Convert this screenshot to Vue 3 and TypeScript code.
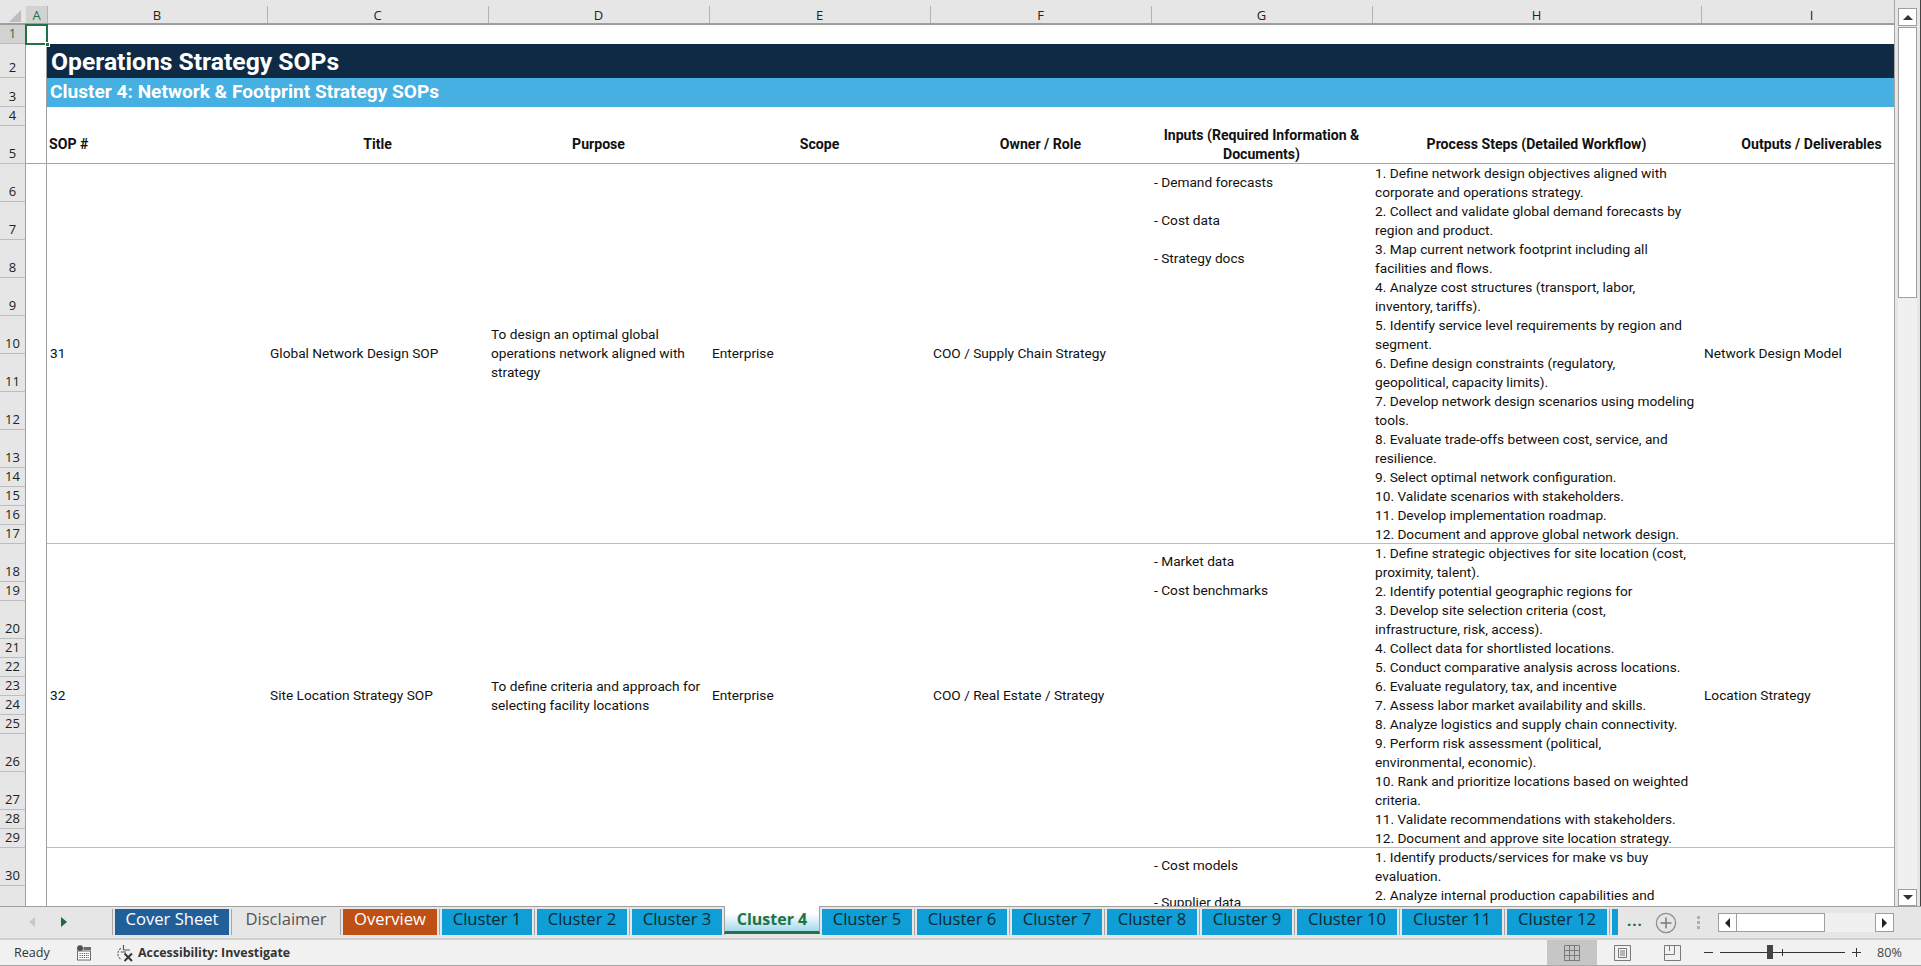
<script setup lang="ts">
const colHeads = ['A', 'B', 'C', 'D', 'E', 'F', 'G', 'H', 'I']
const rowHeads: number[] = Array.from({ length: 30 }, (_, i) => i + 1)

const headers = [
  { key: 'sop', lines: ['SOP #'], left: true },
  { key: 'title', lines: ['Title'] },
  { key: 'purpose', lines: ['Purpose'] },
  { key: 'scope', lines: ['Scope'] },
  { key: 'owner', lines: ['Owner / Role'] },
  { key: 'inputs', lines: ['Inputs (Required Information &', 'Documents)'] },
  { key: 'steps', lines: ['Process Steps (Detailed Workflow)'] },
  { key: 'outputs', lines: ['Outputs / Deliverables'] },
]

const sops = [
  {
    id: 'r31',
    cols: [['31'], ['Global Network Design SOP'], ['To design an optimal global', 'operations network aligned with', 'strategy'], ['Enterprise'], ['COO / Supply Chain Strategy']],
    inputs: ['- Demand forecasts', '- Cost data', '- Strategy docs'],
    steps: [
      '1. Define network design objectives aligned with', 'corporate and operations strategy.',
      '2. Collect and validate global demand forecasts by', 'region and product.',
      '3. Map current network footprint including all', 'facilities and flows.',
      '4. Analyze cost structures (transport, labor,', 'inventory, tariffs).',
      '5. Identify service level requirements by region and', 'segment.',
      '6. Define design constraints (regulatory,', 'geopolitical, capacity limits).',
      '7. Develop network design scenarios using modeling', 'tools.',
      '8. Evaluate trade-offs between cost, service, and', 'resilience.',
      '9. Select optimal network configuration.',
      '10. Validate scenarios with stakeholders.',
      '11. Develop implementation roadmap.',
      '12. Document and approve global network design.',
    ],
    output: 'Network Design Model',
  },
  {
    id: 'r32',
    cols: [['32'], ['Site Location Strategy SOP'], ['To define criteria and approach for', 'selecting facility locations'], ['Enterprise'], ['COO / Real Estate / Strategy']],
    inputs: ['- Market data', '- Cost benchmarks'],
    steps: [
      '1. Define strategic objectives for site location (cost,', 'proximity, talent).',
      '2. Identify potential geographic regions for',
      '3. Develop site selection criteria (cost,', 'infrastructure, risk, access).',
      '4. Collect data for shortlisted locations.',
      '5. Conduct comparative analysis across locations.',
      '6. Evaluate regulatory, tax, and incentive',
      '7. Assess labor market availability and skills.',
      '8. Analyze logistics and supply chain connectivity.',
      '9. Perform risk assessment (political,', 'environmental, economic).',
      '10. Rank and prioritize locations based on weighted', 'criteria.',
      '11. Validate recommendations with stakeholders.',
      '12. Document and approve site location strategy.',
    ],
    output: 'Location Strategy',
  },
  {
    id: 'r33',
    cols: [[], [], [], [], []],
    inputs: ['- Cost models', '- Supplier data'],
    steps: [
      '1. Identify products/services for make vs buy', 'evaluation.',
      '2. Analyze internal production capabilities and',
    ],
    output: '',
  },
]

const tabs = [
  { name: 'Cover Sheet', cls: 'cover' },
  { name: 'Disclaimer', cls: 'plain' },
  { name: 'Overview', cls: 'overview' },
  { name: 'Cluster 1', cls: 'cluster' },
  { name: 'Cluster 2', cls: 'cluster' },
  { name: 'Cluster 3', cls: 'cluster' },
  { name: 'Cluster 4', cls: 'active' },
  { name: 'Cluster 5', cls: 'cluster' },
  { name: 'Cluster 6', cls: 'cluster' },
  { name: 'Cluster 7', cls: 'cluster' },
  { name: 'Cluster 8', cls: 'cluster' },
  { name: 'Cluster 9', cls: 'cluster' },
  { name: 'Cluster 10', cls: 'cluster wide' },
  { name: 'Cluster 11', cls: 'cluster wide' },
  { name: 'Cluster 12', cls: 'cluster wide' },
  { name: '', cls: 'cluster stub' },
]
</script>

<template>
  <div class="app">
    <div class="body">
      <div class="sheet">
        <div class="corner">
          <svg width="12" height="12" viewBox="0 0 12 12"><path d="M12 0V12H0Z" fill="#bdbdbd" /></svg>
        </div>
        <div
          v-for="c in colHeads"
          :key="c"
          class="col-head"
          :class="{ on: c === 'A' }"
        >{{ c }}</div>

        <div
          v-for="n in rowHeads"
          :key="n"
          class="row-head"
          :class="{ on: n === 1 }"
          :style="{ gridRow: n + 1 }"
        >{{ n }}</div>
        <div class="row-blank"></div>

        <div class="a1"><span class="handle"></span></div>
        <div class="a-top"></div>
        <div class="a-rest"></div>

        <div class="top-blank"></div>
        <div class="banner-1">Operations Strategy SOPs</div>
        <div class="banner-2">Cluster 4: Network &amp; Footprint Strategy SOPs</div>
        <div class="gap-row"></div>

        <div
          v-for="h in headers"
          :key="h.key"
          class="hcell"
          :class="{ left: h.left }"
        >
          <div v-for="l in h.lines" :key="l">{{ l }}</div>
        </div>

        <div v-for="s in sops" :key="s.id" class="record" :class="s.id">
          <div v-for="(col, i) in s.cols" :key="i" class="cell mid">
            <div v-for="l in col" :key="l">{{ l }}</div>
          </div>
          <div class="cell inputs" :class="'in-' + s.id">
            <div v-for="l in s.inputs" :key="l">{{ l }}</div>
          </div>
          <div class="cell">
            <div v-for="l in s.steps" :key="l">{{ l }}</div>
          </div>
          <div class="cell mid">{{ s.output }}</div>
        </div>
      </div>

      <div class="vscroll">
        <button class="vbtn up" type="button"><span class="tri-up"></span></button>
        <div class="vthumb"></div>
        <div class="vtrack"></div>
        <button class="vbtn down" type="button"><span class="tri-down"></span></button>
      </div>
    </div>

    <div class="tabbar">
      <div class="nav">
        <span class="arr-left"></span>
        <span class="arr-right"></span>
      </div>
      <div class="tabs">
        <div v-for="t in tabs" :key="t.name + t.cls" class="tab" :class="t.cls">{{ t.name }}</div>
      </div>
      <div class="more">...</div>
      <svg class="add" width="22" height="22" viewBox="0 0 22 22">
        <circle cx="11" cy="11" r="9.6" fill="none" stroke="#8f8f8f" stroke-width="1.3" />
        <path d="M11 5.5V16.5M5.5 11H16.5" stroke="#7a7a7a" stroke-width="1.5" />
      </svg>
      <div class="grip"><i></i><i></i><i></i></div>
      <div class="hscroll">
        <span class="hbtn"><span class="tri-left"></span></span>
        <span class="hthumb"></span>
        <span class="htrack"></span>
        <span class="hbtn"><span class="tri-right"></span></span>
      </div>
    </div>

    <div class="status">
      <span class="ready">Ready</span>
      <svg class="cal" width="16" height="16" viewBox="0 0 16 16">
        <circle cx="4" cy="3.2" r="3" fill="#4f4f4f" />
        <rect x="7.5" y="2" width="7.5" height="3" fill="#6b6b6b" />
        <rect x="1.5" y="6" width="13" height="9" fill="#fff" stroke="#6b6b6b" />
        <path d="M3.5 8.5H13M3.5 10.5H13M3.5 12.5H13" stroke="#5a5a5a" stroke-dasharray="1.2 1" />
      </svg>
      <svg class="acc" width="20" height="18" viewBox="0 0 20 18">
        <path d="M6 4.2A6.5 6.5 0 0 0 6.5 15.6" fill="none" stroke="#6a6a6a" stroke-dasharray="2.4 1" stroke-width="1.1" />
        <path d="M8.5 1V6M8.5 6H15M5.8 8H11" fill="none" stroke="#555" stroke-width="1.2" />
        <path d="M9.5 9.5L17 17M17 9.5L9.5 17" stroke="#333" stroke-width="1.9" />
      </svg>
      <span class="acc-text">Accessibility: Investigate</span>
      <span class="spacer"></span>
      <span class="view current">
        <svg width="16" height="16" viewBox="0 0 16 16">
          <path d="M.5.5H15.5V15.5H.5ZM.5 5.5H15.5M.5 10.5H15.5M5.5.5V15.5M10.5.5V15.5" fill="none" stroke="#7a7a7a" />
        </svg>
      </span>
      <span class="view">
        <svg width="17" height="16" viewBox="0 0 17 16">
          <path d="M.5.5H16.5V15.5H.5Z" fill="none" stroke="#7a7a7a" />
          <path d="M4.5 3.5H12.5V12.5H4.5ZM6 6H11M6 8H11M6 10H11" fill="none" stroke="#7a7a7a" />
        </svg>
      </span>
      <span class="view">
        <svg width="17" height="16" viewBox="0 0 17 16">
          <path d="M.5.5H16.5V15.5H.5ZM.5 9.5H10.5V.5M5.5.5V6" fill="none" stroke="#7a7a7a" />
        </svg>
      </span>
      <div class="zoom">
        <span class="zminus"></span>
        <span class="zline"><span class="ztick"></span><span class="zthumb"></span></span>
        <span class="zplus"></span>
        <span class="zpct">80%</span>
      </div>
    </div>
  </div>
</template>

<style>
html, body { margin: 0; padding: 0; background: #e6e6e6; overflow: hidden; }
</style>

<style scoped>
.app {
  width: 1921px;
  height: 966px;
  display: flex;
  flex-direction: column;
  overflow: hidden;
  background: #e6e6e6;
  font-family: Roboto, "Liberation Sans", sans-serif;
  color: #111;
  box-shadow: inset -1px 0 0 #444;
}
.body { display: flex; height: 906px; flex: none; }

.sheet {
  width: 1895px;
  flex: none;
  height: 906px;
  overflow: hidden;
  display: grid;
  grid-template-columns: 26px 21px 220px 221px 221px 221px 221px 221px 329px 221px;
  grid-template-rows:
    25px 19px 34px 29px 19px 38px
    repeat(8, 38px) repeat(4, 19px)
    38px 19px 38px repeat(5, 19px) 38px 38px 19px 19px
    38px 1fr;
  font-size: 13.7px;
  line-height: 19px;
  background: #fff;
  border-right: 1px solid #a6a6a6;
  box-sizing: border-box;
}

.corner {
  grid-column: 1;
  grid-row: 1;
  background: #e6e6e6;
  border-bottom: 2px solid #9e9e9e;
  box-sizing: border-box;
  padding: 10px 0 0 9px;
  line-height: 0;
}
.col-head {
  grid-row: 1;
  background: #e6e6e6;
  border-bottom: 2px solid #9e9e9e;
  box-sizing: border-box;
  text-align: center;
  font-family: "Open Sans", sans-serif;
  font-size: 13px;
  line-height: 18px;
  padding-top: 6px;
  position: relative;
  color: #222;
}
.col-head::after {
  content: "";
  position: absolute;
  right: -1px;
  top: 6px;
  bottom: 0;
  width: 1px;
  background: #b3b3b3;
  z-index: 1;
}
.col-head.on { background: linear-gradient(#e6e6e6 6px, #d2d2d2 6px); color: #217346; }

.row-head {
  grid-column: 1;
  background: #e6e6e6;
  border-right: 1px solid #a0a0a0;
  border-bottom: 1px solid #bdbdbd;
  box-sizing: border-box;
  display: flex;
  align-items: flex-end;
  justify-content: center;
  font-family: "Open Sans", sans-serif;
  font-size: 13px;
  line-height: 19px;
  color: #222;
}
.row-head.on { background: #d2d2d2; color: #217346; }
.row-blank {
  grid-column: 1;
  grid-row: 32;
  background: #e6e6e6;
  border-right: 1px solid #a0a0a0;
  box-sizing: border-box;
}

.a1 {
  grid-column: 2;
  grid-row: 2;
  position: relative;
  border-right: 1px solid #a0a0a0;
  box-sizing: border-box;
}
.a1::before {
  content: "";
  position: absolute;
  left: -1px;
  top: -1px;
  right: -2px;
  bottom: -1px;
  border: 2px solid #217346;
}
.handle {
  position: absolute;
  right: -4px;
  bottom: -3px;
  width: 5px;
  height: 5px;
  background: #217346;
  border: 1px solid #fff;
  z-index: 1;
  box-sizing: border-box;
}
.a-top {
  grid-column: 2;
  grid-row: 3 / 7;
  border-right: 1px solid #a0a0a0;
  border-bottom: 1px solid #a6a6a6;
  box-sizing: border-box;
}
.a-rest {
  grid-column: 2;
  grid-row: 7 / 33;
  border-right: 1px solid #a0a0a0;
  box-sizing: border-box;
}
.top-blank { grid-column: 3 / 11; grid-row: 2; }
.gap-row { grid-column: 3 / 11; grid-row: 5; }
.banner-1 {
  grid-column: 3 / 11;
  grid-row: 3;
  background: #0f2a44;
  color: #fff;
  font-weight: 700;
  font-size: 24.7px;
  line-height: 36px;
  padding-left: 4px;
}
.banner-2 {
  grid-column: 3 / 11;
  grid-row: 4;
  background: #45b0e1;
  color: #fff;
  font-weight: 700;
  font-size: 19.1px;
  line-height: 28px;
  padding-left: 3px;
}
.hcell {
  grid-row: 6;
  text-align: center;
  font-weight: 700;
  font-size: 14.1px;
  display: flex;
  flex-direction: column;
  justify-content: center;
  padding: 0 2px;
  line-height: 19px;
  border-bottom: 1px solid #a6a6a6;
  box-sizing: border-box;
  white-space: nowrap;
}
.hcell.left { text-align: left; }

.record {
  grid-column: 3 / 11;
  display: grid;
  grid-template-columns: 220px 221px 221px 221px 221px 221px 329px 221px;
  border-bottom: 1px solid #bdbdbd;
  box-sizing: border-box;
  min-height: 0;
}
.r31 { grid-row: 7 / 19; }
.r32 { grid-row: 19 / 31; }
.r33 { grid-row: 31 / 33; border-bottom: 0; }
.cell {
  padding: 0 3px;
  white-space: nowrap;
  min-height: 0;
}
.cell.mid {
  display: flex;
  flex-direction: column;
  justify-content: center;
}
.inputs { display: flex; flex-direction: column; }
.in-r31 { padding-top: 9px; gap: 19px; }
.in-r32 { padding-top: 8px; gap: 10px; }
.in-r33 { padding-top: 8px; gap: 18px; }

.vscroll {
  width: 26px;
  flex: none;
  display: flex;
  flex-direction: column;
  box-sizing: border-box;
  padding: 8px 4px 0 3px;
  height: 906px;
}
.vbtn {
  height: 18px;
  padding: 0;
  background: #fff;
  border: 1px solid #9e9e9e;
  display: flex;
  align-items: center;
  justify-content: center;
  box-sizing: border-box;
  flex: none;
  width: 19px;
}
.vbtn.down { height: 17px; }
.vthumb {
  height: 271px;
  flex: none;
  width: 19px;
  background: #fff;
  border: 1px solid #9e9e9e;
  box-sizing: border-box;
  margin-top: 1px;
}
.vtrack { flex: 1; background: #f0f0f0; width: 19px; }
.tri-up { border: 5px solid transparent; border-top: 0; border-bottom: 5px solid #333; }
.tri-down { border: 5px solid transparent; border-bottom: 0; border-top: 5px solid #333; }

.tabbar {
  height: 32px;
  flex: none;
  display: flex;
  background: #e6e6e6;
  border-top: 1px solid #a0a0a0;
  box-sizing: border-box;
  position: relative;
}
.nav {
  width: 115px;
  flex: none;
  position: relative;
  display: flex;
  align-items: center;
  padding: 0 0 1px 29px;
  box-sizing: border-box;
  gap: 26px;
}
.arr-left {
  border: 5px solid transparent;
  border-left: 0;
  border-right: 6px solid #c8c8c8;
}
.arr-right {
  border: 5px solid transparent;
  border-right: 0;
  border-left: 6px solid #1c6b3c;
}
.nav::after {
  content: "";
  position: absolute;
  right: 2px;
  top: 2px;
  height: 26px;
  width: 1px;
  background: #a6a6a6;
}
.tabs {
  width: 1503px;
  flex: none;
  display: flex;
  gap: 5px;
  padding-top: 2px;
  height: 28px;
  box-sizing: border-box;
}
.tab {
  flex: none;
  width: 90px;
  height: 26px;
  text-align: center;
  font-family: "Open Sans", sans-serif;
  font-size: 16.6px;
  line-height: 20px;
  position: relative;
  white-space: nowrap;
}
.tab:not(.active):not(.stub)::after {
  content: "";
  position: absolute;
  right: -3px;
  top: 0;
  width: 1px;
  height: 26px;
  background: #a6a6a6;
}
.cluster { background: #0f9ed5; color: #0b2a33; }
.cover { width: 114px; background: #215f9a; color: #fff; }
.plain { width: 104px; color: #555; }
.overview { width: 94px; background: #c04f15; color: #fff; }
.wide { width: 100px; }
.stub { width: 6px; }
.active {
  width: 96px;
  height: 28px;
  margin: -3px -3px 0 -3px;
  padding-top: 3px;
  box-sizing: border-box;
  background: linear-gradient(#fff 30%, #a6d8ee 100%);
  border-left: 1px solid #a0a0a0;
  border-right: 1px solid #a0a0a0;
  border-bottom: 3px solid #217346;
  color: #217346;
  font-weight: 700;
  font-size: 16px;
  line-height: 20px;
}
.more {
  margin-left: 9px;
  width: 14px;
  flex: none;
  color: #1c6b3c;
  font-size: 15px;
  font-weight: 700;
  line-height: 26px;
  letter-spacing: 1px;
  font-family: "Open Sans", sans-serif;
}
.add { margin: 5px 0 0 14px; flex: none; }
.grip {
  margin: 9px 0 0 20px;
  display: flex;
  flex-direction: column;
  gap: 2px;
  flex: none;
}
.grip i { width: 3px; height: 3px; background: #b0b0b0; display: block; }
.hscroll {
  display: flex;
  width: 176px;
  height: 19px;
  margin: 6px 0 0 18px;
  flex: none;
}
.hbtn {
  width: 19px;
  flex: none;
  height: 19px;
  background: #fff;
  border: 1px solid #9e9e9e;
  box-sizing: border-box;
  display: flex;
  align-items: center;
  justify-content: center;
}
.hthumb {
  width: 88px;
  flex: none;
  background: #fff;
  border: 1px solid #9e9e9e;
  border-left: 0;
  box-sizing: border-box;
}
.htrack { flex: 1; background: #f0f0f0; }
.tri-left { border: 5px solid transparent; border-left: 0; border-right: 5px solid #222; }
.tri-right { border: 5px solid transparent; border-right: 0; border-left: 5px solid #222; }

.status {
  height: 28px;
  flex: none;
  display: flex;
  align-items: center;
  background: #f1f1f1;
  border-top: 2px solid #d0d0d0;
  border-bottom: 1px solid #a8a8a8;
  box-sizing: border-box;
  font-family: "Open Sans", sans-serif;
  font-size: 12.6px;
  color: #333;
}
.ready { margin-left: 14px; width: 62px; flex: none; }
.cal { flex: none; }
.acc { margin-left: 23px; flex: none; }
.acc-text { margin-left: 3px; font-weight: 700; font-size: 12.4px; color: #333; }
.spacer { flex: 1; }
.view {
  width: 50px;
  height: 100%;
  flex: none;
  display: flex;
  align-items: center;
  justify-content: center;
}
.view.current { background: #c6c6c6; }
.zoom {
  width: 224px;
  flex: none;
  display: flex;
  align-items: center;
  padding-left: 7px;
  box-sizing: border-box;
}
.zminus { width: 9px; height: 1px; background: #333; flex: none; }
.zline {
  width: 125px;
  height: 1px;
  background: #333;
  margin-left: 7px;
  flex: none;
  position: relative;
}
.ztick { position: absolute; left: 62px; top: -3px; width: 1px; height: 7px; background: #333; }
.zthumb { position: absolute; left: 47px; top: -7px; width: 6px; height: 14px; background: #444; }
.zplus {
  width: 9px;
  height: 9px;
  margin-left: 7px;
  flex: none;
  background: linear-gradient(#333, #333) center / 9px 1px no-repeat, linear-gradient(#333, #333) center / 1px 9px no-repeat;
}
.zpct { margin-left: 16px; color: #444; }
</style>
